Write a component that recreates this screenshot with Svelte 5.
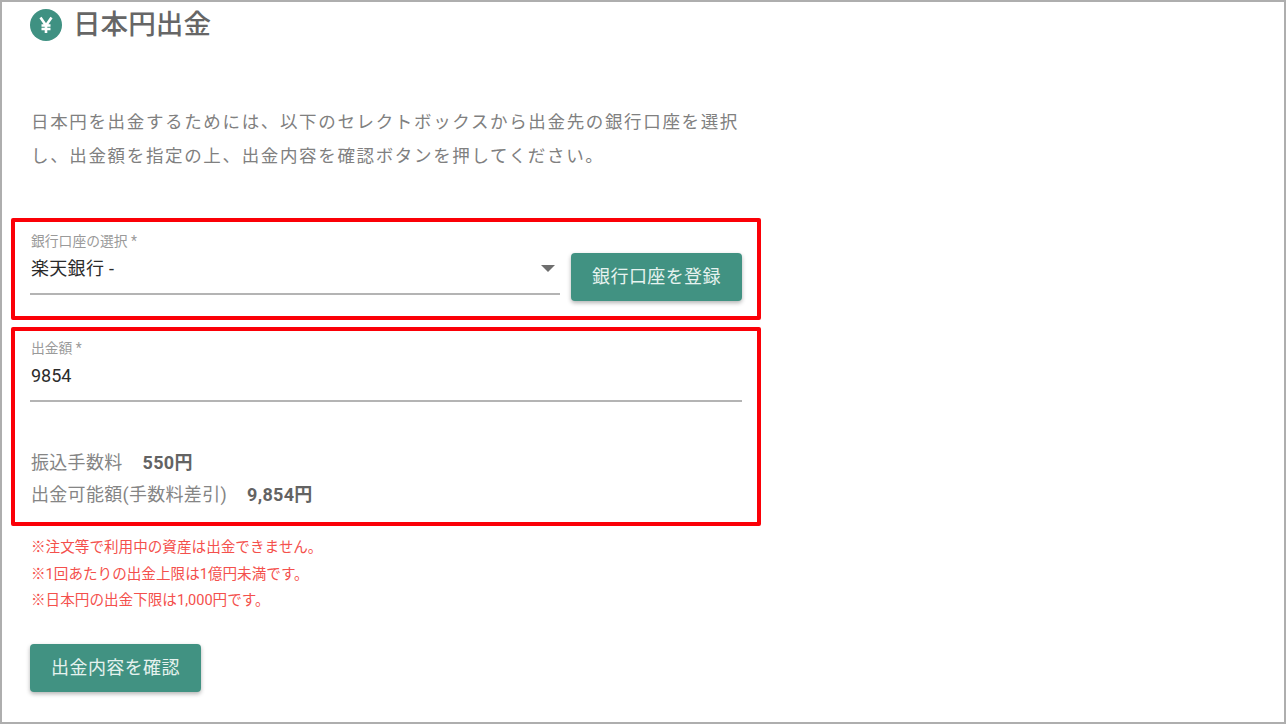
<script>
  const notes = [
    "※注文等で利用中の資産は出金できません。",
    "※1回あたりの出金上限は1億円未満です。",
    "※日本円の出金下限は1,000円です。",
  ];
</script>

<div class="frame">
  <div class="page">
    <header class="title">
      <span class="yen-icon">
        <svg width="32" height="32" viewBox="0 0 32 32">
          <circle cx="16" cy="16" r="16" fill="#3f9182" />
          <path d="M10.5 8.5 16 16.5l5.5-8M16 16.5V24M11.5 16.5h9M11.5 20h9" fill="none" stroke="#fff" stroke-width="2.6" />
        </svg>
      </span>
      <h1>日本円出金</h1>
    </header>

    <p class="lead">
      日本円を出金するためには、以下のセレクトボックスから出金先の銀行口座を選択<br />し、出金額を指定の上、出金内容を確認ボタンを押してください。
    </p>

    <section class="box box-bank">
      <div class="field bank-field">
        <span class="label">銀行口座の選択 *</span>
        <div class="value bank-value">楽天銀行 -</div>
        <span class="arrow"></span>
      </div>
      <button class="btn">銀行口座を登録</button>
    </section>

    <section class="box box-amount">
      <div class="field amount-field">
        <span class="label">出金額 *</span>
        <div class="value">9854</div>
      </div>
      <div class="fees">
        <div class="fee">振込手数料<b>550円</b></div>
        <div class="fee">出金可能額(手数料差引)<b>9,854円</b></div>
      </div>
    </section>

    <ul class="notes">
      {#each notes as note}
        <li>{note}</li>
      {/each}
    </ul>

    <button class="btn">出金内容を確認</button>
  </div>
</div>

<style>
  :global(body) {
    margin: 0;
    background: #fff;
  }

  .frame {
    box-sizing: border-box;
    width: 1286px;
    height: 724px;
    border: 2px solid #aeaeae;
    overflow: hidden;
    font-family: Roboto, "Noto Sans CJK JP", sans-serif;
  }

  .page {
    width: 712px;
    padding-left: 28px;
  }

  .title {
    display: flex;
    align-items: center;
    gap: 11px;
    height: 46px;
  }

  .yen-icon {
    display: flex;
  }

  h1 {
    margin: 0;
    font-size: 27.6px;
    font-weight: 500;
    color: #666;
    line-height: 44px;
  }

  .lead {
    margin: 57px 0 0 1px;
    font-size: 17.5px;
    line-height: 34px;
    letter-spacing: 1.65px;
    color: #808080;
    white-space: nowrap;
  }

  .box {
    box-sizing: border-box;
    margin-left: -19px;
    width: 750px;
    padding: 0 15px;
    border: 4px solid #fb0007;
    border-radius: 2px;
  }

  .box-bank {
    display: flex;
    align-items: flex-start;
    gap: 11px;
    height: 102px;
    margin-top: 45px;
  }

  .box-amount {
    height: 199px;
    margin-top: 7px;
  }

  .field {
    position: relative;
    border-bottom: 2px solid #b4b4b4;
  }

  .bank-field {
    flex: 1;
    height: 60px;
    padding-top: 11px;
  }

  .amount-field {
    height: 60px;
    padding-top: 9px;
  }

  .label {
    display: block;
    margin-left: 1px;
    font-size: 13.8px;
    line-height: 16px;
    color: #9a9a9a;
  }

  .value {
    margin: 7px 0 0 1px;
    font-size: 18px;
    line-height: 26px;
    color: #2b2b2b;
  }

  .bank-value {
    letter-spacing: 0.3px;
  }

  .arrow {
    position: absolute;
    right: 5px;
    top: 43px;
    border-left: 7px solid transparent;
    border-right: 7px solid transparent;
    border-top: 7px solid #6e6e6e;
  }

  .btn {
    display: block;
    width: 171px;
    height: 48px;
    padding: 0 0 4px;
    border: 0;
    border-radius: 4px;
    background: #419282;
    color: #e6f2ef;
    font-family: inherit;
    font-size: 18px;
    letter-spacing: 0.4px;
    box-shadow: 0 2px 4px rgba(0, 0, 0, 0.3);
  }

  .box-bank .btn {
    margin-top: 31px;
  }

  .fees {
    margin-top: 45px;
    margin-left: 1px;
  }

  .fee {
    font-size: 18px;
    letter-spacing: 0.3px;
    line-height: 32px;
    color: #858585;
  }

  .fee b {
    margin-left: 20px;
    font-weight: 700;
    color: #636363;
  }

  .notes {
    list-style: none;
    margin: 8px 0 0 1px;
    padding: 0;
    font-size: 14.6px;
    line-height: 26.5px;
    color: #f4504c;
  }

  .notes + .btn {
    margin-top: 30px;
  }
</style>
